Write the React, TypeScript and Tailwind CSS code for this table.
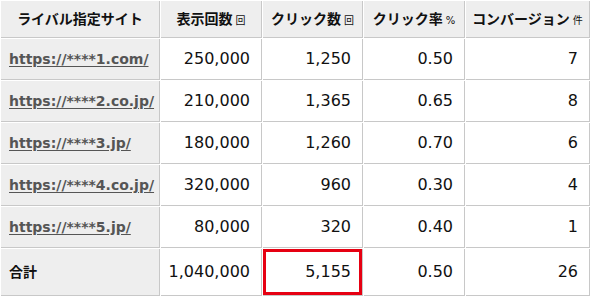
import React from "react";

type row = {
	site: string;
	views: string;
	clicks: string;
	rate: string;
	cv: string;
};

const rows: row[] = [
	{ site: "https://****1.com/", views: "250,000", clicks: "1,250", rate: "0.50", cv: "7" },
	{ site: "https://****2.co.jp/", views: "210,000", clicks: "1,365", rate: "0.65", cv: "8" },
	{ site: "https://****3.jp/", views: "180,000", clicks: "1,260", rate: "0.70", cv: "6" },
	{ site: "https://****4.co.jp/", views: "320,000", clicks: "960", rate: "0.30", cv: "4" },
	{ site: "https://****5.jp/", views: "80,000", clicks: "320", rate: "0.40", cv: "1" },
];

const headers = [
	{ label: "ライバル指定サイト", unit: "" },
	{ label: "表示回数", unit: "回" },
	{ label: "クリック数", unit: "回" },
	{ label: "クリック率", unit: "%" },
	{ label: "コンバージョン", unit: "件" },
];

const th = "h-[37px] border-r border-b border-[#c8c8c8] bg-[#eeeeee] text-center text-[14px] font-bold text-[#111]";
const label = "h-[41px] border-r border-b border-[#c8c8c8] bg-[#eeeeee] pl-[8px] text-left";
const num = "h-[41px] border-r border-b border-[#c8c8c8] bg-white pr-[11px] text-right text-[16px] text-[#111]";

export default function App() {
	return (
		<div className="w-[591px] h-[297px] bg-white font-['DejaVu_Sans','Noto_Sans_CJK_JP',sans-serif]">
			<table className="w-[591px] table-fixed border-separate border-spacing-[1px] leading-none">
				<colgroup>
					<col className="w-[159px]" />
					<col className="w-[101px]" />
					<col className="w-[100px]" />
					<col className="w-[101px]" />
					<col className="w-[124px]" />
				</colgroup>
				<thead>
					<tr>
						{headers.map((h, i) => (
							<th key={i} className={th}>
								{h.label}
								{h.unit && (
									<span className="ml-[3px] text-[10px] font-normal">{h.unit}</span>
								)}
							</th>
						))}
					</tr>
				</thead>
				<tbody>
					{rows.map((r, i) => (
						<tr key={i}>
							<td className={label}>
								<a className="text-[14px] font-bold text-[#555] underline underline-offset-2">
									{r.site}
								</a>
							</td>
							<td className={num}>{r.views}</td>
							<td className={num}>{r.clicks}</td>
							<td className={num}>{r.rate}</td>
							<td className={num}>{r.cv}</td>
						</tr>
					))}
					{/* TOTAL */}
					<tr>
						<td className="h-[47px] border-r border-b border-[#c8c8c8] bg-[#eeeeee] pl-[8px] text-left text-[14px] font-bold text-[#111]">
							合計
						</td>
						<td className="h-[47px] border-r border-b border-[#c8c8c8] bg-white pr-[11px] text-right text-[16px] text-[#111]">
							1,040,000
						</td>
						<td className="h-[47px] border-r border-b border-[#c8c8c8] bg-white pr-[11px] text-right text-[16px] text-[#111] shadow-[inset_0_0_0_3px_#e60012]">
							5,155
						</td>
						<td className="h-[47px] border-r border-b border-[#c8c8c8] bg-white pr-[11px] text-right text-[16px] text-[#111]">
							0.50
						</td>
						<td className="h-[47px] border-r border-b border-[#c8c8c8] bg-white pr-[11px] text-right text-[16px] text-[#111]">
							26
						</td>
					</tr>
				</tbody>
			</table>
		</div>
	);
}
